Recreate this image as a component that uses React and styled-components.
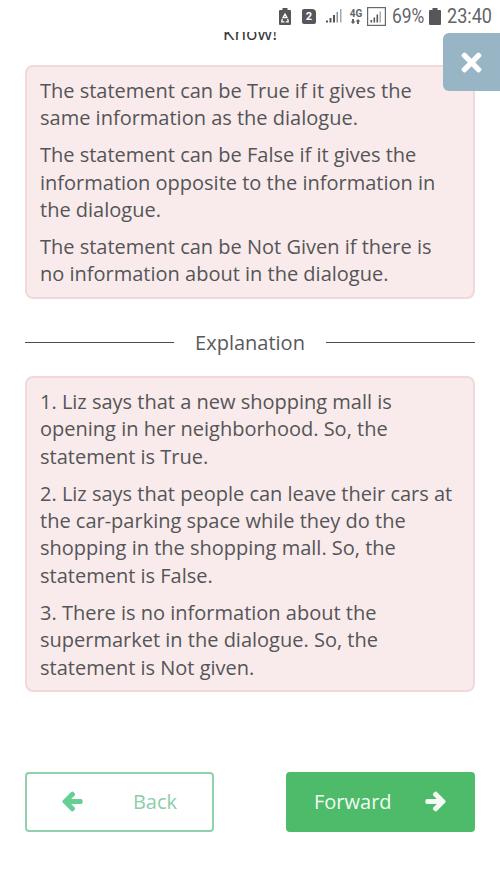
import styled, { createGlobalStyle } from "styled-components";
import { FaArrowLeft, FaArrowRight, FaTimes } from "react-icons/fa";

const GlobalStyle = createGlobalStyle`
  html, body {
    margin: 0;
    padding: 0;
    background: #fff;
  }
  body {
    font-family: "Open Sans", "Liberation Sans", sans-serif;
  }
`;

const Page = styled.div`
  position: relative;
  width: 500px;
  height: 888px;
  overflow: hidden;
  background: #fff;
  display: flex;
  flex-direction: column;
`;

const StatusBar = styled.div`
  box-sizing: border-box;
  height: 31px;
  padding: 1px 8px 0 0;
  display: flex;
  align-items: center;
  justify-content: flex-end;
  font-family: Roboto, "Liberation Sans", sans-serif;
  color: #626467;
`;

const StatusIcon = styled.svg`
  display: block;
  flex: none;
  margin-right: ${({ $gap }) => $gap}px;
`;

const SimBadge = styled.span`
  width: 14px;
  height: 15px;
  margin-right: 10px;
  background: #55575a;
  color: #fff;
  border-radius: 2px 4px 2px 2px;
  font-size: 11px;
  font-weight: 700;
  line-height: 15px;
  text-align: center;
`;

const NetworkLabel = styled.span`
  width: 14px;
  margin-right: 4px;
  display: flex;
  flex-direction: column;
  align-items: center;
  gap: 1px;
  font-size: 10px;
  font-weight: 700;
  line-height: 9px;
`;

const StatusText = styled.span`
  width: ${({ $width }) => $width}px;
  margin-right: ${({ $gap }) => $gap}px;
  font-size: 21px;
  line-height: 24px;
  white-space: nowrap;
  transform: scaleX(${({ $squeeze }) => $squeeze});
  transform-origin: left center;
`;

const Content = styled.main`
  flex: 1;
  padding: 0 25px;
  display: flex;
  flex-direction: column;
`;

const ClippedHeading = styled.div`
  height: 10px;
  margin-top: 1px;
  overflow: hidden;
  display: flex;
  align-items: flex-end;
  justify-content: center;
  font-size: 19px;
  line-height: 18px;
  color: #38383b;
`;

const Note = styled.section`
  box-sizing: border-box;
  margin-top: ${({ $top }) => $top}px;
  padding: 10px 13px 9px;
  background: #f9ebeb;
  border: 2px solid #f1d9d9;
  border-radius: 8px;
  color: #555558;
  font-size: 20px;
  line-height: 27.4px;
`;

const NoteText = styled.p`
  margin: 0 0 9.5px;
  &:last-child {
    margin-bottom: 0;
  }
`;

const Divider = styled.div`
  margin-top: 30px;
  display: flex;
  align-items: center;
  gap: 21px;
  font-size: 20px;
  line-height: 27px;
  color: #59595c;
  &::before,
  &::after {
    content: "";
    flex: 1;
    height: 1px;
    background: #4c4c4f;
  }
`;

const Buttons = styled.div`
  margin-top: 80px;
  display: flex;
  justify-content: space-between;
`;

const Button = styled.div`
  box-sizing: border-box;
  width: 189px;
  height: 60px;
  padding: ${({ $primary }) => ($primary ? "0 27px 0 26px" : "0 35px")};
  display: flex;
  align-items: center;
  justify-content: space-between;
  border-radius: 4px;
  border: 2px solid ${({ $primary }) => ($primary ? "#4dbb6a" : "#8fd0ad")};
  background: ${({ $primary }) => ($primary ? "#4dbb6a" : "#fff")};
  color: ${({ $primary }) => ($primary ? "#f1faf3" : "#8ccdaa")};
  font-size: 20px;
`;

const BackArrow = styled(FaArrowLeft)`
  color: #66cf94;
  font-size: 21px;
  stroke: currentColor;
  stroke-width: 45;
`;

const ForwardArrow = styled(FaArrowRight)`
  color: #f4fbf6;
  font-size: 21px;
  stroke: currentColor;
  stroke-width: 45;
`;

const CloseButton = styled.button`
  position: absolute;
  top: 33px;
  right: 0;
  width: 57px;
  height: 58px;
  padding: 0;
  border: 0;
  border-radius: 6px 0 0 6px;
  background: #98b5c5;
  color: #fff;
  font-size: 29px;
  display: flex;
  align-items: center;
  justify-content: center;
`;

const Signal = () => (
  <StatusIcon $gap={7} width="16" height="14" viewBox="0 0 16 14">
    <rect x="0" y="11.500" width="2" height="2" fill="#55575a" />
    <rect x="3.500" y="9" width="2" height="4.500" fill="#55575a" />
    <rect x="7" y="6" width="2" height="7.500" fill="#55575a" />
    <rect x="10.500" y="3" width="1.500" height="10.500" fill="#8f9193" />
    <rect x="14" y="0" width="1.500" height="13.500" fill="#a5a7a9" />
  </StatusIcon>
);

export default function App() {
  return (
    <Page>
      <GlobalStyle />
      <StatusBar>
        <StatusIcon $gap={11} width="12" height="17" viewBox="0 0 12 17">
          <path d="M3.500 0h5v2H11a1 1 0 0 1 1 1v13a1 1 0 0 1-1 1H1a1 1 0 0 1-1-1V3a1 1 0 0 1 1-1h2.500z" fill="#55575a" />
          <path d="M6 6 8 9.500H4zM3.200 11 2.800 13.800H5.500M8.800 11l.4 2.800H6.800" fill="none" stroke="#fff" strokeWidth="1.300" />
        </StatusIcon>
        <SimBadge>2</SimBadge>
        <Signal />
        <NetworkLabel>
          4G
          <svg width="10" height="5" viewBox="0 0 10 5">
            <path d="M1 0h2v2.500h1.500L2 5-.5 2.500H1zM6 5h2V2.500h1.500L7 0 4.500 2.500H6z" fill="#626467" />
          </svg>
        </NetworkLabel>
        <StatusIcon $gap={6} width="19" height="19" viewBox="0 0 19 19">
          <rect x="0.600" y="0.600" width="17.800" height="17.800" fill="none" stroke="#66686b" strokeWidth="1.200" />
          <rect x="3.500" y="13" width="1.600" height="2.500" fill="#55575a" />
          <rect x="6.500" y="10.500" width="1.600" height="5" fill="#55575a" />
          <rect x="9.500" y="7.500" width="1.600" height="8" fill="#55575a" />
          <rect x="12.500" y="4.500" width="1.400" height="11" fill="#a5a7a9" />
        </StatusIcon>
        <StatusText $width={33} $gap={4} $squeeze={0.83}>69%</StatusText>
        <StatusIcon $gap={6} width="12" height="17" viewBox="0 0 12 17">
          <path d="M3.500 0h5v2H11a1 1 0 0 1 1 1v13a1 1 0 0 1-1 1H1a1 1 0 0 1-1-1V3a1 1 0 0 1 1-1h2.500z" fill="#55575a" />
        </StatusIcon>
        <StatusText $width={45} $gap={0} $squeeze={0.86}>23:40</StatusText>
      </StatusBar>

      <Content>
        <ClippedHeading>Know!</ClippedHeading>

        <Note $top={23}>
          <NoteText>The statement can be True if it gives the same information as the dialogue.</NoteText>
          <NoteText>The statement can be False if it gives the information opposite to the information in the dialogue.</NoteText>
          <NoteText>The statement can be Not Given if there is no information about in the dialogue.</NoteText>
        </Note>

        <Divider>Explanation</Divider>

        <Note $top={20}>
          <NoteText>1. Liz says that a new shopping mall is opening in her neighborhood. So, the statement is True.</NoteText>
          <NoteText>2. Liz says that people can leave their cars at the car-parking space while they do the shopping in the shopping mall. So, the statement is False.</NoteText>
          <NoteText>3. There is no information about the supermarket in the dialogue. So, the statement is Not given.</NoteText>
        </Note>

        <Buttons>
          <Button>
            <BackArrow />
            <span>Back</span>
          </Button>
          <Button $primary>
            <span>Forward</span>
            <ForwardArrow />
          </Button>
        </Buttons>
      </Content>

      <CloseButton aria-label="Close">
        <FaTimes />
      </CloseButton>
    </Page>
  );
}
